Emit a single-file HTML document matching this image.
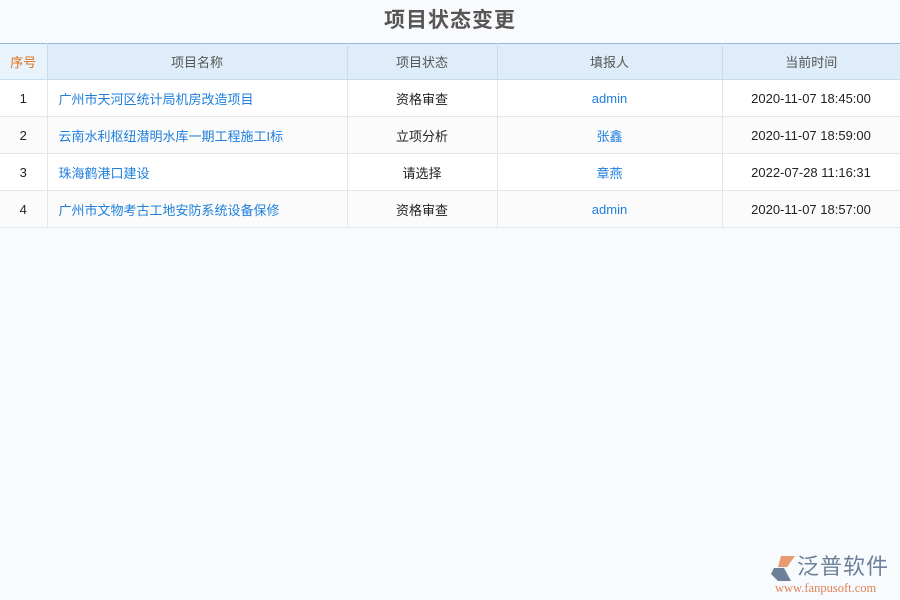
<!DOCTYPE html>
<html><head><meta charset="utf-8"><style>
body{margin:0;width:900px;height:600px;background:#f8fbfd;font-family:"Liberation Sans","Noto Sans CJK SC",sans-serif;position:relative;overflow:hidden}
h1{margin:0;position:absolute;top:6px;left:0;width:900px;text-align:center;font-size:21px;line-height:30px;color:#585554;font-weight:bold;letter-spacing:1px}
table{position:absolute;top:43px;left:0;width:900px;border-collapse:collapse;font-size:13px;table-layout:fixed}
th,td{padding:0}
th{height:35px;background:#deedf9;color:#555;font-weight:normal;border-top:1px solid #8fb9de;border-bottom:1px solid #c8dcef;border-right:1px solid #c9dcec}
th.n{color:#e07020;background:#e8f3fc}
td{height:36px;border-bottom:1px solid #e3e6e9;border-right:1px solid #e3e6e9;text-align:center;color:#222;background:#fff}
tr:nth-child(odd) td{background:#fbfbfb}
td.l{text-align:left;padding-left:11px;color:#1e7fdc}
td.b{color:#1e7fdc}
.logo{position:absolute;left:770px;top:553px}
</style></head><body>
<h1>项目状态变更</h1>
<table>
<colgroup><col style="width:47px"><col style="width:300px"><col style="width:150px"><col style="width:225px"><col style="width:178px"></colgroup>
<tr><th class="n">序号</th><th>项目名称</th><th>项目状态</th><th>填报人</th><th style="border-right:none">当前时间</th></tr>
<tr><td>1</td><td class="l">广州市天河区统计局机房改造项目</td><td>资格审查</td><td class="b">admin</td><td>2020-11-07 18:45:00</td></tr>
<tr><td>2</td><td class="l">云南水利枢纽潜明水库一期工程施工I标</td><td>立项分析</td><td class="b">张鑫</td><td>2020-11-07 18:59:00</td></tr>
<tr><td>3</td><td class="l">珠海鹤港口建设</td><td>请选择</td><td class="b">章燕</td><td>2022-07-28 11:16:31</td></tr>
<tr><td>4</td><td class="l">广州市文物考古工地安防系统设备保修</td><td>资格审查</td><td class="b">admin</td><td>2020-11-07 18:57:00</td></tr>
</table>
<div class="logo">
<svg width="28" height="28" style="position:absolute;left:0;top:2px"><path d="M11 1 L25 1 L17 12 L8 12 Z" fill="#e89a70"/><path d="M4 13 L14 13 L21 26 L8 26 L1 19 Z" fill="#6d7f99"/></svg>
<div style="position:absolute;left:27px;top:0;font-size:22px;line-height:28px;color:#6d7f99;white-space:nowrap;letter-spacing:1px">泛普软件</div>
<div style="position:absolute;left:5px;top:29px;font-size:12.5px;line-height:13px;color:#e0825a;font-family:'Liberation Serif',serif;white-space:nowrap">www.fanpusoft.com</div>
</div>
</body></html>
